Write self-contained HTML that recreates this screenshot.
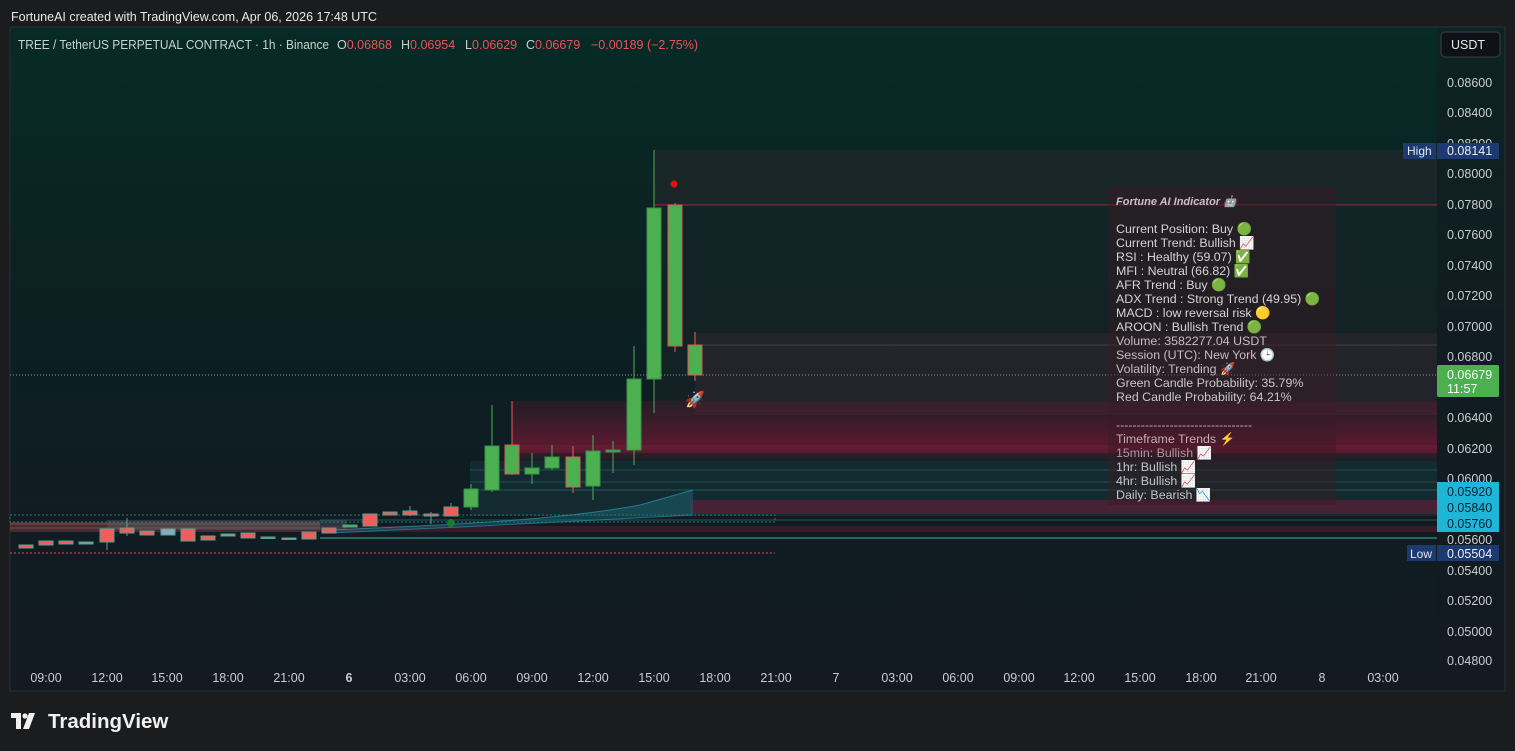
<!DOCTYPE html>
<html><head><meta charset="utf-8"><style>
body{margin:0;width:1515px;height:751px;background:#1b1c1e;overflow:hidden;font-family:"Liberation Sans",sans-serif;position:relative}
.t{position:absolute;white-space:nowrap}
</style></head><body>
<div class="t" style="left:11px;top:10px;font-size:12.5px;color:#e8e8e8">FortuneAI created with TradingView.com, Apr 06, 2026 17:48 UTC</div>
<svg style="position:absolute;left:0;top:0" width="1515" height="751" xmlns="http://www.w3.org/2000/svg" font-family="Liberation Sans, sans-serif">
<defs>
<linearGradient id="bg" x1="0" y1="0" x2="0" y2="1">
<stop offset="0" stop-color="#072b26"/><stop offset="0.45" stop-color="#0c1f22"/><stop offset="1" stop-color="#131a22"/></linearGradient>
<linearGradient id="pk" x1="0" y1="0" x2="0" y2="1">
<stop offset="0" stop-color="#5a1a30" stop-opacity="0.3"/><stop offset="0.7" stop-color="#8a1838" stop-opacity="0.6"/><stop offset="1" stop-color="#3a2030" stop-opacity="0.3"/></linearGradient>
</defs>
<rect x="10" y="27" width="1495" height="664" fill="url(#bg)" stroke="#2a2e35"/>
<rect x="1437" y="28" width="67" height="637" fill="#131a20" opacity="0.5"/>
<rect x="654" y="150" width="783" height="55" fill="#3a2a30" opacity="0.35"/>
<line x1="654" y1="205" x2="1437" y2="205" stroke="#7a2a3a" stroke-width="1.5"/>
<rect x="654" y="205" width="783" height="210" fill="#20282c" opacity="0.35"/>
<rect x="695" y="333" width="742" height="82" fill="#3a2a32" opacity="0.4"/>
<line x1="695" y1="345" x2="1437" y2="345" stroke="#4a3a44" />
<rect x="512" y="401" width="925" height="60" fill="url(#pk)"/>
<rect x="512" y="445" width="925" height="8" fill="#a01a40" opacity="0.35"/>
<rect x="470" y="461" width="967" height="55" fill="#15363a" opacity="0.6"/>
<line x1="470" y1="470" x2="1437" y2="470" stroke="#1d5050" />
<line x1="470" y1="482" x2="1437" y2="482" stroke="#1d5050" />
<line x1="470" y1="490" x2="1437" y2="490" stroke="#1d5a58" />
<rect x="690" y="500" width="747" height="14" fill="#7a1a38" opacity="0.5"/>
<line x1="320" y1="520" x2="1437" y2="520" stroke="#1d5a58" />
<rect x="320" y="526" width="1117" height="6" fill="#6a1a34" opacity="0.45"/>
<line x1="320" y1="538" x2="1437" y2="538" stroke="#1d6a60" stroke-width="2"/>
<rect x="10" y="515" width="765" height="7" fill="none" stroke="#2a7a70" stroke-dasharray="2 2"/>
<rect x="10" y="522" width="310" height="10" fill="#a05050" opacity="0.35"/>
<line x1="10" y1="524" x2="320" y2="524" stroke="#c06060" opacity="0.6"/>
<line x1="10" y1="528" x2="320" y2="528" stroke="#c06060" opacity="0.5"/>
<rect x="107" y="520" width="240" height="10" fill="#5a6a78" opacity="0.35"/>
<path d="M330 530 C450 525 560 520 640 505 L693 490 L693 515 C600 520 450 528 330 533Z" fill="#1d6a78" opacity="0.45"/>
<path d="M330 530 C450 525 560 520 640 505 L693 490" fill="none" stroke="#2a9ab0" opacity="0.7"/>
<path d="M330 533 C450 528 600 520 693 515" fill="none" stroke="#2a9ab0" opacity="0.6"/>
<line x1="10" y1="375" x2="1437" y2="375" stroke="#7aa090" stroke-dasharray="1 2"/>
<line x1="10" y1="553" x2="775" y2="553" stroke="#e05050" stroke-dasharray="2 2"/>
<g stroke-width="1">
<g fill="#f25c5c" stroke="#5aa090">
<rect x="19" y="545" width="14" height="3"/><rect x="39" y="541" width="14" height="4"/><rect x="59" y="541" width="14" height="3"/>
<rect x="79" y="542" width="14" height="2" fill="#7aa"/>
<line x1="107" y1="529" x2="107" y2="550"/><rect x="100" y="529" width="14" height="13"/>
<line x1="127" y1="518" x2="127" y2="536"/><rect x="120" y="528" width="14" height="5"/>
<rect x="140" y="531" width="14" height="4"/><rect x="161" y="529" width="14" height="6" fill="#8ab"/>
<rect x="181" y="529" width="14" height="12"/><rect x="201" y="536" width="14" height="4"/>
<rect x="221" y="534" width="14" height="2" fill="#7aa"/><rect x="241" y="533" width="14" height="5"/>
<rect x="261" y="537" width="14" height="1.5"/><rect x="282" y="538" width="14" height="1.5" fill="#7aa"/>
<rect x="302" y="532" width="14" height="7"/><rect x="322" y="528" width="14" height="5"/>
<rect x="343" y="525" width="14" height="2" fill="#4caf50"/>
<rect x="363" y="514" width="14" height="12"/><rect x="383" y="512" width="14" height="3"/>
<line x1="410" y1="506" x2="410" y2="516"/><rect x="403" y="511" width="14" height="4"/>
<line x1="431" y1="512" x2="431" y2="524"/><rect x="424" y="514" width="14" height="2"/>
<line x1="451" y1="503" x2="451" y2="516"/><rect x="444" y="507" width="14" height="9"/>
</g>
<g stroke="#4caf50">
<line x1="471" y1="484" x2="471" y2="510"/><line x1="492" y1="405" x2="492" y2="492"/>
<line x1="532" y1="453" x2="532" y2="484"/><line x1="552" y1="445" x2="552" y2="470"/>
<line x1="593" y1="435" x2="593" y2="500"/><line x1="613" y1="441" x2="613" y2="473"/>
<line x1="634" y1="346" x2="634" y2="465"/><line x1="654" y1="150" x2="654" y2="413"/>
</g>
<g stroke="#f25c5c"><line x1="512" y1="401" x2="512" y2="475"/><line x1="573" y1="446" x2="573" y2="493"/><line x1="675" y1="203" x2="675" y2="352"/><line x1="695" y1="332" x2="695" y2="381"/></g>
<g fill="#4caf50" stroke="#3a9050">
<rect x="464" y="489" width="14" height="18"/><rect x="485" y="446" width="14" height="44"/>
<rect x="525" y="468" width="14" height="6"/><rect x="545" y="457" width="14" height="11"/>
<rect x="586" y="451" width="14" height="35"/><rect x="606" y="450" width="14" height="2"/>
<rect x="627" y="379" width="14" height="71"/><rect x="647" y="208" width="14" height="171"/>
</g>
<g fill="#4caf50" stroke="#e05555">
<rect x="505" y="445" width="14" height="29"/><rect x="566" y="457" width="14" height="30"/>
<rect x="668" y="205" width="14" height="141"/><rect x="688" y="345" width="14" height="30"/>
</g>
</g>
<circle cx="674" cy="184" r="3.5" fill="#e01010"/>
<circle cx="451" cy="523" r="4" fill="#1a7a30"/>
<text x="685" y="405" font-size="16" fill="#4caf50">🚀</text>
<rect x="1108" y="187" width="228" height="318" fill="#3a1a24" opacity="0.45"/>
<g font-size="12.4" fill="#d4d4d4">
<text x="1116" y="205" font-size="11" font-style="italic" font-weight="bold" fill="#c8c0c8">Fortune AI Indicator 🤖</text>
<text x="1116" y="233">Current Position: Buy 🟢</text>
<text x="1116" y="247">Current Trend: Bullish 📈</text>
<text x="1116" y="261">RSI : Healthy (59.07) ✅</text>
<text x="1116" y="275">MFI : Neutral (66.82) ✅</text>
<text x="1116" y="289">AFR Trend : Buy 🟢</text>
<text x="1116" y="303">ADX Trend : Strong Trend (49.95) 🟢</text>
<text x="1116" y="317">MACD : low reversal risk 🟡</text>
<text x="1116" y="331">AROON : Bullish Trend 🟢</text>
<text x="1116" y="345" fill="#c4bcc0">Volume: 3582277.04 USDT</text>
<text x="1116" y="359" fill="#c4bcc0">Session (UTC): New York 🕒</text>
<text x="1116" y="373" fill="#c4bcc0">Volatility: Trending 🚀</text>
<text x="1116" y="387" fill="#c4c8c8">Green Candle Probability: 35.79%</text>
<text x="1116" y="401" fill="#c4c8c8">Red Candle Probability: 64.21%</text>
<text x="1116" y="429" fill="#b8a8b0">---------------------------------</text>
<text x="1116" y="443" fill="#c8a8b8">Timeframe Trends ⚡</text>
<text x="1116" y="457" fill="#a898a0">15min: Bullish 📈</text>
<text x="1116" y="471" fill="#c4c4c4">1hr: Bullish 📈</text>
<text x="1116" y="485" fill="#c4c4c4">4hr: Bullish 📈</text>
<text x="1116" y="499" fill="#c4c4c4">Daily: Bearish 📉</text>
</g>
<g font-size="12.5" fill="#c8cdd4">
<text x="1447" y="87">0.08600</text><text x="1447" y="117">0.08400</text><text x="1447" y="148">0.08200</text>
<text x="1447" y="178">0.08000</text><text x="1447" y="209">0.07800</text><text x="1447" y="239">0.07600</text>
<text x="1447" y="270">0.07400</text><text x="1447" y="300">0.07200</text><text x="1447" y="331">0.07000</text>
<text x="1447" y="361">0.06800</text><text x="1447" y="422">0.06400</text><text x="1447" y="453">0.06200</text>
<text x="1447" y="483">0.06000</text><text x="1447" y="544">0.05600</text><text x="1447" y="575">0.05400</text>
<text x="1447" y="605">0.05200</text><text x="1447" y="636">0.05000</text><text x="1447" y="665">0.04800</text>
</g>
<rect x="1403" y="143" width="33" height="16" fill="#1c3a70"/><text x="1407" y="155" font-size="12" fill="#e0e6f0">High</text>
<rect x="1437" y="143" width="62" height="16" fill="#1c3a70"/><text x="1447" y="155" font-size="12.5" fill="#e8eef8">0.08141</text>
<rect x="1437" y="365" width="62" height="32" fill="#4caf50" rx="2"/>
<text x="1447" y="379" font-size="12.5" fill="#f4fff4">0.06679</text><text x="1447" y="393" font-size="12.5" fill="#f4fff4">11:57</text>
<rect x="1437" y="482" width="62" height="50" fill="#1fb5d8"/>
<g font-size="12.5" fill="#0a2030"><text x="1447" y="496">0.05920</text><text x="1447" y="512">0.05840</text><text x="1447" y="528">0.05760</text></g>
<rect x="1407" y="545" width="29" height="16" fill="#1c3a70"/><text x="1410" y="558" font-size="12" fill="#e0e6f0">Low</text>
<rect x="1437" y="545" width="62" height="16" fill="#1c3a70"/><text x="1447" y="558" font-size="12.5" fill="#e8eef8">0.05504</text>
<rect x="1441" y="32" width="59" height="25" rx="4" fill="#0e1216" stroke="#3a4048"/><text x="1451" y="49" font-size="12.5" fill="#e8e8e8">USDT</text>
<g font-size="12.5" fill="#c8d0cc">
<text x="18" y="49" textLength="311" lengthAdjust="spacingAndGlyphs">TREE / TetherUS PERPETUAL CONTRACT · 1h · Binance</text>
<text x="337" y="49">O<tspan fill="#f0505a">0.06868</tspan></text>
<text x="401" y="49">H<tspan fill="#f0505a">0.06954</tspan></text>
<text x="465" y="49">L<tspan fill="#f0505a">0.06629</tspan></text>
<text x="526" y="49">C<tspan fill="#f0505a">0.06679</tspan></text>
<text x="591" y="49" fill="#f0505a">−0.00189 (−2.75%)</text>
</g>
<g font-size="12.5" fill="#c8cdd4" text-anchor="middle">
<text x="46" y="682">09:00</text><text x="107" y="682">12:00</text><text x="167" y="682">15:00</text><text x="228" y="682">18:00</text><text x="289" y="682">21:00</text>
<text x="349" y="682" font-weight="bold">6</text><text x="410" y="682">03:00</text><text x="471" y="682">06:00</text><text x="532" y="682">09:00</text><text x="593" y="682">12:00</text>
<text x="654" y="682">15:00</text><text x="715" y="682">18:00</text><text x="776" y="682">21:00</text><text x="836" y="682">7</text><text x="897" y="682">03:00</text>
<text x="958" y="682">06:00</text><text x="1019" y="682">09:00</text><text x="1079" y="682">12:00</text><text x="1140" y="682">15:00</text><text x="1201" y="682">18:00</text>
<text x="1261" y="682">21:00</text><text x="1322" y="682">8</text><text x="1383" y="682">03:00</text>
</g>
<g fill="#f0f0f0">
<path d="M11 713 h10 v16 h-5 v-11 h-5z"/><circle cx="25" cy="716" r="2.6"/><path d="M29 713 h6 l-6 16 h-6z"/>
</g>
<text x="48" y="728" font-size="20.5" font-weight="bold" fill="#f0f0f0">TradingView</text>
</svg>
</body></html>
